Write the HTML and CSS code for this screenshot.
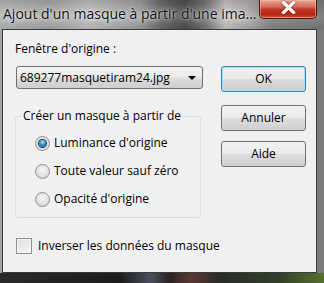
FILE: index.html
```html
<!DOCTYPE html>
<html lang="fr">
<head>
  <meta charset="UTF-8" />
  <title>Ajout d'un masque à partir d'une image</title>
  <link rel="stylesheet" href="styles.css">
</head>
<body>
  <div class="window">
    <div class="titlebar">
      <span class="title">Ajout d'un masque à partir d'une ima...</span>
      <div class="close-btn">
        <svg width="15" height="13" viewBox="0 0 15 13">
          <path d="M2.5 1.5 L12.5 11.5 M12.5 1.5 L2.5 11.5" stroke="#fff" stroke-width="3.2" stroke-linecap="square" fill="none"/>
        </svg>
      </div>
    </div>

    <div class="client">
      <div class="main-row">
        <div class="left-col">
          <div class="label">Fenêtre d'origine :</div>
          <div class="combo">
            <span class="combo-text">689277masquetiram24.jpg</span>
            <span class="combo-arrow"></span>
          </div>

          <fieldset class="group">
            <legend>Créer un masque à partir de</legend>
            <div class="radio-list">
              <label class="radio-row">
                <span class="radio checked"></span>
                <span>Luminance d'origine</span>
              </label>
              <label class="radio-row">
                <span class="radio"></span>
                <span>Toute valeur sauf zéro</span>
              </label>
              <label class="radio-row">
                <span class="radio"></span>
                <span>Opacité d'origine</span>
              </label>
            </div>
          </fieldset>
        </div>

        <div class="right-col">
          <div class="btn default">OK</div>
          <div class="btn">Annuler</div>
          <div class="btn">Aide</div>
        </div>
      </div>

      <label class="check-row">
        <span class="checkbox"></span>
        <span>Inverser les données du masque</span>
      </label>
    </div>

    <div class="bottom-frame"></div>
  </div>
</body>
</html>
```

FILE: styles.css
```css
html, body {
  margin: 0;
  padding: 0;
  width: 324px;
  height: 283px;
  overflow: hidden;
}

body {
  font-family: "Open Sans", "Noto Sans", sans-serif;
  font-size: 12px;
  color: #000;
  background: linear-gradient(90deg, #a4a4a4 0, #8c8c8c 40%, #7a7a7a 100%);
}

.window {
  display: flex;
  flex-direction: column;
  height: 283px;
}

/* barre de titre façon Aero */
.titlebar {
  height: 29px;
  display: flex;
  justify-content: space-between;
  align-items: flex-start;
  background:
    linear-gradient(180deg, rgba(0, 0, 0, 0.12) 0, rgba(255, 255, 255, 0.05) 60%, rgba(0, 0, 0, 0.1) 100%),
    linear-gradient(90deg, #b9b9b9 0, #a9a9a9 50px, #c2c2c2 90px, #a0a0a0 140px, #6e6e6e 160px, #4e4e4e 185px, #767676 205px, #c8c4c4 225px, #b0acac 250px, #8a8a8a 270px, #7c7c7c 324px);
}

.title {
  padding: 5px 0 0 3px;
  font-size: 14px;
  line-height: 18px;
  color: #111;
  text-shadow: 0 0 6px rgba(255, 255, 255, 0.9), 0 0 2px rgba(255, 255, 255, 0.7);
  white-space: nowrap;
}

.close-btn {
  width: 58px;
  height: 19px;
  margin-right: 7px;
  border: 1px solid #4e1a12;
  border-top: none;
  border-radius: 0 0 5px 5px;
  background: linear-gradient(180deg, #e7a595 0, #d67160 35%, #c2321d 55%, #b8261a 80%, #d2563c 100%);
  box-shadow: inset 0 0 0 1px rgba(255, 200, 190, 0.45);
  display: flex;
  justify-content: center;
  align-items: flex-start;
  padding-top: 1px;
  box-sizing: border-box;
}

.close-btn svg {
  filter: drop-shadow(0 0 1px rgba(90, 0, 0, 0.8));
}

.client {
  width: 315px;
  height: 244px;
  margin-left: 2px;
  box-sizing: border-box;
  border: 1px solid #3a3a3a;
  background: #f0f0f0;
  padding: 11px 10px 0 12px;
  display: flex;
  flex-direction: column;
}

.main-row {
  display: flex;
  gap: 18px;
}

.left-col {
  width: 188px;
  display: flex;
  flex-direction: column;
}

.label {
  line-height: 16px;
}

.combo {
  margin: 9px 0 0 1px;
  height: 23px;
  box-sizing: border-box;
  border: 1px solid #707070;
  border-radius: 3px;
  background: linear-gradient(180deg, #f3f3f3 0, #ebebeb 48%, #dddddd 52%, #cfcfcf 100%);
  display: flex;
  align-items: center;
  justify-content: space-between;
  padding: 0 6px 0 3px;
}

.combo-text {
  line-height: 16px;
}

.combo-arrow {
  width: 0;
  height: 0;
  border-left: 4px solid transparent;
  border-right: 4px solid transparent;
  border-top: 4px solid #000;
  margin-top: 1px;
}

.group {
  margin: 19px 0 0 0;
  padding: 0;
  width: 186px;
  box-sizing: border-box;
  border: 1px solid #d5dfe5;
  border-radius: 3px;
}

.group legend {
  margin-left: 5px;
  padding: 0 2px;
  line-height: 16px;
  white-space: nowrap;
}

.radio-list {
  padding: 11px 0 10px 19px;
  display: flex;
  flex-direction: column;
  gap: 12px;
}

.radio-row, .check-row {
  display: flex;
  align-items: center;
  gap: 4px;
  line-height: 16px;
}

.radio {
  width: 13px;
  height: 13px;
  border-radius: 50%;
  border: 1px solid #8e8f8f;
  background: radial-gradient(circle at 50% 40%, #f4f4f4 0, #e2e2e2 55%, #c8c8c8 100%);
  display: flex;
  align-items: center;
  justify-content: center;
  flex: none;
}

.radio.checked::after {
  content: "";
  width: 7px;
  height: 7px;
  border-radius: 50%;
  background: radial-gradient(circle at 50% 35%, #b6e4fb 0, #3c8fd0 45%, #0d3a6a 100%);
  box-shadow: 0 0 0 1px #163a5e;
}

.right-col {
  width: 85px;
  padding-top: 25px;
  display: flex;
  flex-direction: column;
}

.btn {
  height: 26px;
  box-sizing: border-box;
  border: 1px solid #707070;
  border-radius: 3px;
  background: linear-gradient(180deg, #f2f2f2 0, #ebebeb 48%, #dddddd 52%, #cfcfcf 100%);
  display: flex;
  align-items: center;
  justify-content: center;
  line-height: 16px;
  margin-top: 10px;
}

.btn.default {
  margin-top: 0;
  margin-bottom: 3px;
  border-color: #3c7fb1;
  box-shadow: inset 0 0 0 1px #a6dcf5;
  background: linear-gradient(180deg, #f0f0f0 0, #e8e8e8 48%, #dbdbdb 52%, #cdcdcd 100%);
}

.check-row {
  margin-top: 20px;
  margin-left: 1px;
}

.checkbox {
  width: 14px;
  height: 14px;
  border: 1px solid #8e8f8f;
  background: linear-gradient(135deg, #dedede 0, #f6f6f6 100%);
  box-shadow: inset 0 0 0 1px #f4f4f4;
  flex: none;
  margin-right: 2px;
}

.bottom-frame {
  flex: 1;
  background: linear-gradient(90deg, #2a2a2a 0, #1c1c1c 120px, #4a4f5e 150px, #2a2224 170px, #5a3a30 190px, #2a2a2a 220px, #33402a 280px, #56702e 324px);
}
```
